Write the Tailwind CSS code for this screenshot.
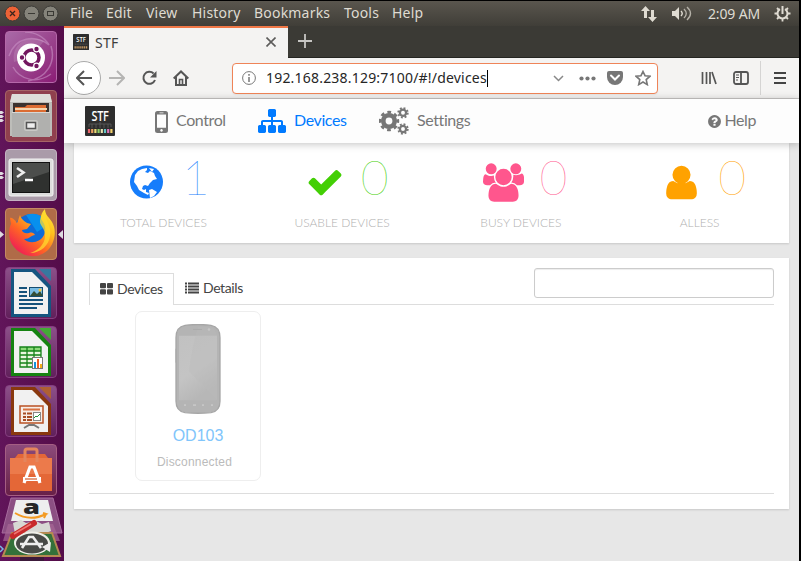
<!DOCTYPE html>
<html lang="en">
<head>
<meta charset="utf-8">
<title>STF</title>
<script src="https://cdn.jsdelivr.net/npm/@tailwindcss/browser@4"></script>
</head>
<body class="w-[801px] h-[561px] overflow-hidden bg-black pr-[2px] pt-px font-['Noto_Sans',sans-serif]">
<div class="flex h-[560px] w-[799px] flex-col overflow-hidden">
  <!-- System menu bar -->
  <header class="flex h-[25px] shrink-0 items-center bg-linear-to-b from-[#5a564e] to-[#403e38] text-[14px] text-[#dfdbd2]">
    <svg class="ml-[4px] h-[18px] w-[56px] shrink-0" viewBox="0 0 56 18" fill="none">
      <circle cx="8.500" cy="8.500" r="7.500" fill="#ed6236" stroke="#3c3b37"/><path d="M6 6l5 5m0-5l-5 5" stroke="#3c241c" stroke-width="1.300"/>
      <circle cx="27.500" cy="8.500" r="7.500" fill="#85837a" stroke="#3c3b37"/><path d="M24 8.500h7" stroke="#3a3934"/>
      <circle cx="46.500" cy="8.500" r="7.500" fill="#85837a" stroke="#3c3b37"/><rect x="43.500" y="6.500" width="6" height="4" stroke="#3a3934"/>
    </svg>
    <nav class="-mt-px ml-[10px] flex whitespace-nowrap leading-[24px] tracking-[0.200px]">
      <span class="w-[36px]">File</span><span class="w-[40px]">Edit</span><span class="w-[46px]">View</span><span class="w-[62px]">History</span><span class="w-[90px]">Bookmarks</span><span class="w-[48px]">Tools</span><span>Help</span>
    </nav>
    <div class="ml-auto mr-[8px] flex items-center">
      <svg class="h-[18px] w-[18px]" viewBox="0 0 18 18" fill="#dfdbd2"><path d="M5.500 1l4.500 5H7v7H4V6H1zM12.500 17L8 12h3V5h3v7h3z"/></svg>
      <svg class="ml-[14px] h-[18px] w-[21px]" viewBox="0 0 21 18" fill="none" stroke="#dfdbd2" stroke-width="1.400"><path d="M0 6h3l4-4v13l-4-4H0z" fill="#dfdbd2" stroke="none"/><path d="M9 6q2.500 2.500 0 5"/><path d="M12 4q4.500 4.500 0 9M15 2q7 6.500 0 13" stroke="#b5b1a8"/></svg>
      <span class="ml-[15px] w-[54px] whitespace-nowrap text-[14px] leading-[20px] tracking-[-0.150px]">2:09 AM</span>
      <svg class="ml-[12px] h-[17px] w-[17px]" viewBox="0 0 17 17" fill="none" stroke="#dfdbd2"><path d="M6 4.200a5 5 0 1 0 5 0" stroke-width="2"/><path d="M8.500 1v8" stroke-width="2"/><path d="M3 3l2 2M14 3l-2 2M0.500 8.500h3M13.500 8.500h3M3 14l2-2M14 14l-2-2M8.500 13v3.500" stroke-width="1.800"/></svg>
    </div>
  </header>

  <div class="flex min-h-0 flex-1">
    <!-- Application launcher -->
    <aside class="relative flex w-[64px] shrink-0 flex-col items-start gap-[7px] overflow-hidden bg-linear-to-r from-[#61155a] to-[#540c49] pl-[5px] pt-[5px]">
      <div class="h-[52px] w-[52px] shrink-0 rounded-[4px] border border-[#b568a9] bg-linear-to-br from-[#a96aa8] to-[#8b1a76]">
        <svg class="h-[50px] w-[50px]" viewBox="0 0 50 50" fill="none"><path d="M3 24C9 5 29 2 43 13 38 5 29 0 19 0M45 14c5 16-4 32-23 35M7 35c7 13 24 17 38 7" stroke="#c891c4" stroke-width="1.500" opacity=".6"/><path d="M8 30C5 13 20 2 38 9L25 25z" fill="#fff" opacity=".13"/><circle cx="25" cy="25.500" r="14" fill="#fff"/><circle cx="25.500" cy="25.500" r="7.500" stroke="#72165f" stroke-width="3.500"/><g fill="#72165f" stroke="#fff" stroke-width="1.200"><circle cx="16" cy="25.500" r="2.800"/><circle cx="30.500" cy="17" r="2.800"/><circle cx="30.500" cy="34" r="2.800"/></g></svg>
      </div>
      <div class="h-[52px] w-[52px] shrink-0 rounded-[4px] border border-[#a66567] bg-[#90404e]">
        <svg class="h-[50px] w-[50px]" viewBox="0 0 50 50"><path d="M6 3h38l2 9v33H4V12z" fill="#bdbdb9"/><path d="M6 3h38l2 8H4z" fill="#deded9"/><path d="M7 12h36v12H7z" fill="#3c322e"/><path d="M9 16h10l2-2h19v9H9z" fill="#dc6c32"/><path d="M9 18h32" stroke="#f6d5ad" stroke-width="2"/><path d="M6 21h38v25H6z" fill="#b0b0ae"/><path d="M6 21.500h38" stroke="#d7d7d5"/><rect x="18" y="29" width="14" height="11" rx="2.500" fill="#c9c9c6"/><rect x="20.500" y="31.500" width="9" height="6" fill="#eee" stroke="#555" stroke-width="1.500"/></svg>
      </div>
      <div class="h-[52px] w-[52px] shrink-0 rounded-[4px] border border-[#c4b3c2] bg-[#aa9ba9]">
        <svg class="h-[50px] w-[50px]" viewBox="0 0 50 50" fill="none"><rect x="3" y="9" width="44" height="37" rx="2" fill="#ddd" stroke="#f3f3f3"/><rect x="6.500" y="12.500" width="37" height="30" fill="#2f312f" stroke="#111"/><path d="M7 13h36v9L7 34z" fill="#fff" opacity=".14"/><path d="M11 18l6.500 4.500-6.500 4.500" stroke="#eee" stroke-width="2.600"/><path d="M19 30h8" stroke="#fff" stroke-width="2.500"/></svg>
      </div>
      <div class="h-[52px] w-[52px] shrink-0 rounded-[4px] border border-[#c38a64] bg-[#b06b48]">
        <svg class="h-[50px] w-[50px]" viewBox="0 0 50 50">
          <defs><linearGradient id="fx" x1="1" y1="0" x2=".2" y2="1"><stop offset="0" stop-color="#fff23f"/><stop offset=".35" stop-color="#ffbe1c"/><stop offset=".65" stop-color="#ff6524"/><stop offset="1" stop-color="#ed145c"/></linearGradient></defs>
          <circle cx="26" cy="24" r="19" fill="#0d6bd8"/><path d="M20 6q15-5 22 10L31 23z" fill="#0790ee"/><path d="M4 9c3-1 6 4 7 5l3-8c1 4 4 6 7 8l4 1-4 5-5 1c0 2 3 4 7 3 3-1 5 0 6 2-4 0-5 4-11 4 6 6 17 3 20-4 3-8 0-12-3-16-1-2 1-7 4-10 0 6 4 8 7 13 5 8 3 21-4 28-10 10-26 7-34-3C1 30 3 19 5 15z" fill="url(#fx)"/><path d="M39 2c0 10 7 15 5 25-1 9-9 17-20 17 13-4 20-16 11-28-3-5 1-10 4-14z" fill="#ffda2d" opacity=".75"/>
        </svg>
      </div>
      <div class="h-[52px] w-[52px] shrink-0 rounded-[4px] border border-[#853e80] bg-linear-to-b from-[#8c5089] to-[#61205b]">
        <svg class="h-[50px] w-[50px]" viewBox="0 0 50 50"><path d="M5 1h24l16 17v31H5z" fill="#155580"/><path d="M8 4h18l16 16v26H8z" fill="#f1f1f1"/><path d="M33 1h12v12z" fill="#36789f"/><path d="M13 20h8M13 24h8M13 28h8M13 32h24M13 36h24M13 40h18" stroke="#15527b" stroke-width="2"/><rect x="23.500" y="19.500" width="13" height="9" fill="#79bce3" stroke="#174e70"/><path d="M24 28l4-5 3 3 3-3 3 5z" fill="#344e35"/><circle cx="34" cy="22" r="1.500" fill="#f7c63c"/></svg>
      </div>
      <div class="h-[52px] w-[52px] shrink-0 rounded-[4px] border border-[#853e80] bg-linear-to-b from-[#8c5089] to-[#61205b]">
        <svg class="h-[50px] w-[50px]" viewBox="0 0 50 50"><path d="M5 1h24l16 17v31H5z" fill="#168311"/><path d="M8 4h18l16 16v26H8z" fill="#f1f1f1"/><path d="M33 1h12v12z" fill="#44aa35"/><path d="M14 20h21v20H14z" fill="#eaf7df"/><path d="M14 20h21v4H14z" fill="#8cda79"/><path d="M14 20h21v20H14zM21 20v20M28 20v20M14 24h21M14 28h21M14 32h21M14 36h21" fill="none" stroke="#158218" stroke-width="1.300"/><rect x="26.500" y="30.500" width="10" height="11" fill="#fff" stroke="#777"/><path d="M28 35h2v6h-2z" fill="#1591dc"/><path d="M31 32h2v9h-2z" fill="#ee5c25"/><path d="M34 37h2v4h-2z" fill="#f4ae18"/></svg>
      </div>
      <div class="h-[52px] w-[52px] shrink-0 rounded-[4px] border border-[#853e80] bg-linear-to-b from-[#8c5089] to-[#61205b]">
        <svg class="h-[50px] w-[50px]" viewBox="0 0 50 50"><path d="M5 1h24l16 17v31H5z" fill="#89380e"/><path d="M8 4h18l16 16v26H8z" fill="#f1f1f1"/><path d="M33 1h12v12z" fill="#af6033"/><rect x="14" y="20" width="23" height="17" fill="#f8eee7" stroke="#b95224" stroke-width="1.500"/><path d="M17 23.500h17" stroke="#d87343" stroke-width="2"/><path d="M17 27.500h3m1 0h5M17 31h3m1 0h5M17 34h3m1 0h5" stroke="#a74d24" stroke-width="1.800"/><rect x="27.500" y="26.500" width="7" height="8" fill="#fff" stroke="#888"/><path d="M28 32l2-2 1 1 3-3" fill="none" stroke="#23933b"/><path d="M18 42l5-3h5l5 3" fill="none" stroke="#777" stroke-width="2"/></svg>
      </div>
      <div class="h-[52px] w-[52px] shrink-0 rounded-[4px] border border-[#a55e83] bg-linear-to-b from-[#8c4b7b] to-[#682048]">
        <svg class="h-[50px] w-[50px]" viewBox="0 0 50 50" fill="none"><path d="M4 13h5l3-4h27l3 4h4v33H4z" fill="#e46737"/><path d="M4 13h42v16H4z" fill="#f08354" opacity=".7"/><path d="M19 17V6q0-2 2-2h8q2 0 2 2v11" stroke="#e4855d" stroke-width="3"/><path d="M18 38l6-16h4l6 16" stroke="#fff" stroke-width="3.200"/><path d="M17 34h18" stroke="#fff" stroke-width="4"/><path d="M19 34h12" stroke="#d56a3e" stroke-width="1.300"/></svg>
      </div>
      <!-- Running markers and the folded end of the launcher -->
      <svg class="absolute left-0 top-0 h-[535px] w-[64px]" viewBox="0 0 64 535" fill="#dedbe0">
        <path d="M0 85h2l2 1.500-2 1.500H0zM0 89h2l2 1.500-2 1.500H0zM0 93h2l2 1.500-2 1.500H0zM0 146h2l2 1.500-2 1.500H0zM0 150h2l2 1.500-2 1.500H0zM0 205l4 3.500-4 3.500zM63 204v9l-5-4.500z"/>
        <path d="M11 472h42l9 35H2z" fill="#8c4f83" stroke="#a66b9d"/><path d="M16 474h32l5 21H11z" fill="#eee"/>
        <text x="23" y="488" font-family="Open Sans, sans-serif" font-size="20" font-weight="800" fill="#262626" textLength="17" lengthAdjust="spacingAndGlyphs">a</text><path d="M15 487q15 9 31 1l-3-1m3 1l-2 4" fill="none" stroke="#f39a22" stroke-width="2"/>
        <path d="M8 498h45l7 17H3z" fill="#a66895" opacity=".7"/><path d="M13 497l8-3 5 3 10-2 6 3 7-2 2 9-8 3H15z" fill="#d7d8d4"/>
        <path d="M12 507h40l8 23H3z" fill="#34713a" stroke="#b58a52" stroke-width="2"/><path d="M20 531h24v4H20z" fill="#3c1a3a"/><ellipse cx="32" cy="517" rx="18" ry="11.500" fill="#efefe9"/><ellipse cx="32" cy="517.500" rx="16" ry="10" fill="#484a47"/><path d="M22 522l7-11h4l8 11M20 518h23" fill="none" stroke="#eee" stroke-width="2.600"/><path d="M42 521l9-5-1 10z" fill="#eee"/><path d="M13 510l21-13" fill="none" stroke="#c82a2c" stroke-width="6" stroke-linecap="round"/><path d="M14 508l17-10" stroke="#ef7771" stroke-width="1.500"/><path d="M0 520l3 3-3 3" fill="none" stroke="#79b9e7" stroke-width="1.500"/>
      </svg>
    </aside>

    <main class="flex min-w-0 flex-1 flex-col bg-[#e7e7e7]">
      <!-- Browser tabs -->
      <div class="flex h-[32px] shrink-0 border-b border-[#252521] bg-[#3b3a35]">
        <div class="flex h-[32px] w-[224px] items-center border-t-2 border-[#f07746] bg-[#f4f3f2] pb-[2px] pl-[9px] pr-[12px] text-[14px] text-[#3d3d3d]">
          <svg class="h-[16px] w-[16px]" viewBox="0 0 30 30"><rect width="30" height="30" rx="1" fill="#2e2e2e"/><text x="6" y="15" font-family="Open Sans, sans-serif" font-size="14" font-weight="600" fill="#fff" textLength="18" lengthAdjust="spacingAndGlyphs">STF</text><path d="M4 19h23" stroke="#777" stroke-dasharray="2 1"/><path d="M3 25h24" stroke="#e6b06f" stroke-width="4" stroke-dasharray="2 1.600"/></svg>
          <span class="ml-[6px] tracking-[0.300px]">STF</span>
          <svg class="ml-auto h-[10px] w-[10px]" viewBox="0 0 10 10" stroke="#5d5c5b" stroke-width="1.600"><path d="M.5.500l9 9m0-9l-9 9"/></svg>
        </div>
        <svg class="ml-[10px] mt-[8px] h-[14px] w-[14px]" viewBox="0 0 14 14" stroke="#c7c6c3" stroke-width="1.800"><path d="M7 0v14M0 7h14"/></svg>
      </div>
      <!-- Address toolbar -->
      <div class="flex h-[41px] shrink-0 items-center border-b border-[#c8c6c5] bg-[#f4f3f2]">
        <div class="ml-[3px] flex h-[34px] w-[34px] items-center justify-center rounded-full border border-[#aaa] bg-white"><svg class="h-[16px] w-[16px]" viewBox="0 0 16 16" fill="none" stroke="#555" stroke-width="2"><path d="M16 8H1M8 1L1 8l7 7"/></svg></div>
        <svg class="ml-[8px] h-[16px] w-[16px]" viewBox="0 0 16 16" fill="none" stroke="#b5b4b3" stroke-width="2"><path d="M0 8h15M8 1l7 7-7 7"/></svg>
        <svg class="ml-[16px] h-[16px] w-[16px]" viewBox="0 0 16 16" fill="none" stroke="#555" stroke-width="2"><path d="M12.600 3.500A6 6 0 1 0 14 10"/><path d="M15.500 1v6.500H9z" fill="#555" stroke="none"/></svg>
        <svg class="ml-[16px] h-[16px] w-[16px]" viewBox="0 0 16 16" fill="none" stroke="#555" stroke-width="2"><path d="M.7 8.500L8 1.500l7.300 7M3 7v8h10V7"/><path d="M6.500 15V9.500h3V15" stroke-width="1.600"/></svg>
        <div class="ml-[43px] flex h-[31px] w-[426px] items-center rounded-[4px] border border-[#ef8458] bg-white pl-[9px] shadow-[0_1px_2px_rgba(0,0,0,0.06)]">
          <svg class="h-[14px] w-[14px]" viewBox="0 0 14 14" fill="none" stroke="#777"><circle cx="7" cy="7" r="6.400"/><path d="M7 6v5M7 3v1.800" stroke-width="1.500"/></svg>
          <span class="ml-[10px] w-[221px] whitespace-nowrap text-[14px] leading-[18px] tracking-[0.200px] text-[#262626]">192.168.238.129:7100/#!/devices</span><i class="h-[17px] w-px bg-black"></i>
          <svg class="ml-[65px] h-[7px] w-[11px]" viewBox="0 0 11 7" fill="none" stroke="#888" stroke-width="1.500"><path d="M1 1l4.500 4.500L10 1"/></svg>
          <svg class="ml-[15px] h-[5px] w-[17px]" viewBox="0 0 17 5" fill="#777"><circle cx="2.500" cy="2.500" r="2.100"/><circle cx="8.500" cy="2.500" r="2.100"/><circle cx="14.500" cy="2.500" r="2.100"/></svg>
          <svg class="ml-[11px] h-[14px] w-[16px]" viewBox="0 0 16 14"><path d="M2 0h12q2 0 2 2v4a8 8 0 0 1-16 0V2q0-2 2-2z" fill="#777"/><path d="M4 4.500l4 4 4-4" fill="none" stroke="#fff" stroke-width="2" stroke-linecap="round"/></svg>
          <svg class="ml-[12px] h-[16px] w-[16px]" viewBox="0 0 16 16" fill="none" stroke="#777" stroke-width="1.600" stroke-linejoin="miter"><path d="M8 1.500l2 4.200 5 .5-3.800 3.400 1.100 5L8 12l-4.300 2.600 1.100-5L1 6.200l5-.5z"/></svg>
        </div>
        <svg class="ml-[43px] h-[14px] w-[16px]" viewBox="0 0 16 14" stroke="#555" stroke-width="1.700"><path d="M1.500 1v12M5.500 1v12M9 1v12M11 1l4 12"/></svg>
        <svg class="ml-[16px] h-[14px] w-[16px]" viewBox="0 0 16 14" fill="none" stroke="#555" stroke-width="1.800"><rect x="1" y="1" width="14" height="12" rx="2"/><path d="M8 1v12"/><path d="M3 4h3M3 6.500h3M3 9h2" stroke-width="1.100"/></svg>
        <i class="ml-[11px] h-[34px] w-px bg-[#d5d4d3]"></i>
        <svg class="ml-[13px] h-[12px] w-[12px]" viewBox="0 0 12 12" stroke="#444" stroke-width="2"><path d="M0 1h12M0 6h12M0 11h12"/></svg>
      </div>

      <!-- Page navigation -->
      <nav class="relative z-10 flex h-[44px] shrink-0 items-center bg-[#fdfdfd] font-[Lato,sans-serif] text-[16px] tracking-[-0.400px] text-[#777] shadow-[0_1px_8px_rgba(0,0,0,0.25)]">
        <svg class="ml-[21px] h-[30px] w-[30px]" viewBox="0 0 30 30"><rect width="30" height="30" rx="1" fill="#2e2e2e"/><text x="6.500" y="14.500" font-family="Open Sans, sans-serif" font-size="14" font-weight="600" fill="#fff" textLength="17" lengthAdjust="spacingAndGlyphs">STF</text><path d="M4 21v-3h22v3M7 18v4M11 18v4M15 16v6M19 18v4M23 18v4" fill="none" stroke="#666" stroke-width=".7"/><g stroke-width="2.200"><path d="M4 23v4" stroke="#e8646a"/><path d="M7.200 23v4" stroke="#e9a05f"/><path d="M10.400 23v4" stroke="#e9db76"/><path d="M13.600 23v4" stroke="#8ccb65"/><path d="M16.800 23v4" stroke="#e8e2b0"/><path d="M20 23v4" stroke="#62c5c6"/><path d="M23.200 23v4" stroke="#dc75b8"/><path d="M26.400 23v4" stroke="#efce6a"/></g></svg>
        <svg class="ml-[40px] mt-[2px] h-[22px] w-[13px]" viewBox="0 0 13 22"><path fill-rule="evenodd" d="M2.500 0h8Q13 0 13 2.500v17q0 2.500-2.500 2.500h-8Q0 22 0 19.500v-17Q0 0 2.500 0zM2 3.500v13.300h9V3.500zM4.500 1.500v.7h4v-.7zM6.500 18.100a1.300 1.300 0 1 0 .01 0z" fill="#777"/></svg>
        <span class="-mt-[2px] ml-[8px] w-[50px]">Control</span>
        <svg class="ml-[32px] h-[28px] w-[28px]" viewBox="0 0 1792 1792" fill="#007aff"><path d="M1792 1248v320q0 40-28 68t-68 28h-320q-40 0-68-28t-28-68v-320q0-40 28-68t68-28h96v-192h-512v192h96q40 0 68 28t28 68v320q0 40-28 68t-68 28h-320q-40 0-68-28t-28-68v-320q0-40 28-68t68-28h96v-192h-512v192h96q40 0 68 28t28 68v320q0 40-28 68t-68 28h-320q-40 0-68-28t-28-68v-320q0-40 28-68t68-28h96v-192q0-52 38-90t90-38h512v-192h-96q-40 0-68-28t-28-68v-320q0-40 28-68t68-28h320q40 0 68 28t28 68v320q0 40-28 68t-68 28h-96v192h512q52 0 90 38t38 90v192h96q40 0 68 28t28 68z"/></svg>
        <span class="-mt-[2px] ml-[8px] w-[53px] text-[#007aff]">Devices</span>
        <svg class="ml-[32px] h-[28px] w-[30px]" viewBox="0 0 30 28" fill="none" stroke="#777"><circle cx="10" cy="14" r="5.700" stroke-width="4.600"/><circle cx="10" cy="14" r="8.800" stroke-width="2.800" stroke-dasharray="3.600 3.312" transform="rotate(-12 10 14)"/><circle cx="24" cy="5.800" r="3.100" stroke-width="2.300"/><circle cx="24" cy="5.800" r="4.800" stroke-width="1.800" stroke-dasharray="1.900 1.870"/><circle cx="24" cy="22" r="3.100" stroke-width="2.300"/><circle cx="24" cy="22" r="4.800" stroke-width="1.800" stroke-dasharray="1.900 1.870"/></svg>
        <span class="-mt-[2px] ml-[8px]">Settings</span>
        <svg class="ml-auto h-[15px] w-[15px]" viewBox="0 0 1792 1792" fill="#777"><path d="M1024 1376v-192q0-14-9-23t-23-9h-192q-14 0-23 9t-9 23v192q0 14 9 23t23 9h192q14 0 23-9t9-23zm256-672q0-88-55.500-163t-138.500-116-170-41q-243 0-371 213-15 24 8 42l132 100q7 6 19 6 16 0 25-12 53-68 86-92 34-24 86-24 48 0 85.500 26t37.500 59q0 38-20 61t-68 45q-63 28-115.500 86.500t-52.500 125.500v36q0 14 9 23t23 9h192q14 0 23-9t9-23q0-19 21.500-49.500t54.500-49.500q32-18 49-28.500t46-35 44.500-48 28-60.500 12.500-81zm384 192q0 209-103 385.500t-279.500 279.500-385.500 103-385.500-103-279.500-279.500-103-385.500 103-385.500 279.500-279.500 385.500-103 385.500 103 279.500 279.500 103 385.500z"/></svg>
        <span class="-mt-[2px] ml-[2px] mr-[43px]">Help</span>
      </nav>

      <!-- Device totals -->
      <section class="mx-[10px] grid h-[100px] shrink-0 grid-cols-4 bg-white font-[Lato,sans-serif] shadow-[0_1px_2px_rgba(0,0,0,0.14)]">
        <div class="flex flex-col items-center text-[#167dfb]">
          <div class="flex h-[72px] w-full items-center pl-[54px]">
            <svg class="mt-[6px] h-[40px] w-[38px] shrink-0" viewBox="0 0 38 40"><circle cx="18.500" cy="20" r="16.500" fill="currentColor"/><g fill="#fff"><path d="M7 13l3-4 4-2 5-1v2l-2 2 3 1 2-2 4 2 1 3 2 3-4 1-3 3-2 3-3-1-2 1-1 3 2 1 2-1v3l3 1-1 2-4-2-5-3-2-4-3-4z"/><path d="M21 28l3-1 5 3-3 4-4 2zM21 6l5 1-2 3z"/></g></svg>
            <span class="-mt-[5px] ml-[16px] text-[48px] font-thin leading-[66px]">1</span>
          </div>
          <span class="text-[12px] font-light leading-[16px] text-[#b0b0b0]">TOTAL DEVICES</span>
        </div>
        <div class="flex flex-col items-center text-[#43cf05]">
          <div class="flex h-[72px] w-full items-center pl-[53px]">
            <svg class="mt-[6px] h-[38px] w-[38px] shrink-0" viewBox="0 0 1792 1792" fill="currentColor"><path d="M1671 566q0 40-28 68l-724 724-136 136q-28 28-68 28t-68-28l-136-136-362-362q-28-28-28-68t28-68l136-136q28-28 68-28t68 28l294 295 656-657q28-28 68-28t68 28l136 136q28 28 28 68z"/></svg>
            <span class="-mt-[5px] ml-[17px] text-[48px] font-thin leading-[66px]">0</span>
          </div>
          <span class="text-[12px] font-light leading-[16px] text-[#b0b0b0]">USABLE DEVICES</span>
        </div>
        <div class="flex flex-col items-center text-[#ff568d]">
          <div class="flex h-[72px] w-full items-center pl-[51px]">
            <svg class="mt-[6px] h-[39px] w-[41px] shrink-0" viewBox="-64 0 1920 1792" fill="currentColor"><path d="M529 896q-162 5-265 128h-134q-82 0-138-40.500t-56-118.500q0-353 124-353 6 0 43.500 21t97.500 42.500 119 21.500q67 0 133-23-5 37-5 66 0 159 93 293zm1071 637q0 120-73 189.500t-194 69.500h-874q-121 0-194-69.500t-73-189.500q0-53 3.500-103.500t14-109 26.500-108.500 43-97.500 62-81 85.500-53.500 111.500-20q10 0 43 21.500t73 48 107 48 135 21.500 135-21.500 107-48 73-48 43-21.500q61 0 111.500 20t85.500 53.500 62 81 43 97.500 26.500 108.500 14 109 3.500 103.500zm-1024-1277q0 106-75 181t-181 75-181-75-75-181 75-181 181-75 181 75 75 181zm704 384q0 159-112.500 271.500t-271.500 112.500-271.500-112.500-112.500-271.500 112.500-271.500 271.500-112.500 271.500 112.500 112.500 271.500zm576 225q0 78-56 118.500t-138 40.500h-134q-103-123-265-128 93-134 93-293 0-29-5-66 66 23 133 23 59 0 119-21.500t97.500-42.500 43.500-21q124 0 124 353zm-128-609q0 106-75 181t-181 75-181-75-75-181 75-181 181-75 181 75 75 181z"/></svg>
            <span class="-mt-[5px] ml-[16px] text-[48px] font-thin leading-[66px]">0</span>
          </div>
          <span class="text-[12px] font-light leading-[16px] text-[#b0b0b0]">BUSY DEVICES</span>
        </div>
        <div class="flex flex-col items-center text-[#ffa200]">
          <div class="flex h-[72px] w-full items-center pl-[52px]">
            <svg class="mt-[6px] h-[39px] w-[39px] shrink-0" viewBox="0 0 1792 1792" fill="currentColor"><path d="M1600 1399q0 109-62.500 187t-150.500 78h-982q-88 0-150.500-78t-62.500-187q0-85 8.500-160.500t31.500-152 58.500-131 94-89 134.500-34.500q164 128 377 128t377-128q76 0 134.500 34.500t94 89 58.500 131 31.500 152 8.500 160.500zm-288-855q0 172-122 294t-294 122-294-122-122-294 122-294 294-122 294 122 122 294z"/></svg>
            <span class="-mt-[5px] ml-[17px] text-[48px] font-thin leading-[66px]">0</span>
          </div>
          <span class="text-[12px] font-light leading-[16px] text-[#b0b0b0]">ALLESS</span>
        </div>
      </section>

      <!-- Device list -->
      <section class="mx-[10px] mt-[15px] h-[251px] shrink-0 bg-white px-[15px] pt-[15px] shadow-[0_1px_2px_rgba(0,0,0,0.14)]">
        <div class="flex h-[32px] border-b border-[#ddd] font-[Lato,sans-serif] text-[14px] tracking-[-0.400px] text-[#444]">
          <div class="flex h-[32px] w-[85px] items-center border border-b-0 border-[#ddd] bg-white pb-[2px] pl-[10px]">
            <svg class="h-[12px] w-[13px]" viewBox="0 0 13 12" fill="#444"><rect width="6" height="5.300" rx="1"/><rect x="7" width="6" height="5.300" rx="1"/><rect y="6.300" width="6" height="5.300" rx="1"/><rect x="7" y="6.300" width="6" height="5.300" rx="1"/></svg><span class="ml-[4px]">Devices</span>
          </div>
          <div class="flex items-center pb-[2px] pl-[11px]"><svg class="h-[12px] w-[14px]" viewBox="0 0 14 12" stroke="#444" stroke-width="1.800"><path d="M0 1.500h2m1 0h11M0 4.500h2m1 0h11M0 7.500h2m1 0h11M0 10.500h2m1 0h11"/></svg><span class="ml-[4px]">Details</span></div>
          <input aria-label="Search devices" class="-mt-[5px] ml-auto h-[30px] w-[240px] rounded-[3px] border border-[#ccc] bg-white shadow-[inset_0_1px_1px_rgba(0,0,0,0.075)]">
        </div>
        <div class="h-[189px] border-b border-[#ddd] pl-[46px] pt-[6px]">
          <div class="flex h-[170px] w-[126px] flex-col items-center rounded-[7px] border border-[#eee] pt-[12px] font-['Liberation_Sans',sans-serif]">
            <svg class="h-[90px] w-[46px]" viewBox="0 0 46 91" preserveAspectRatio="none"><defs><linearGradient id="sc" x1="0" y1="0" x2=".4" y2="1"><stop stop-color="#c1c1c1"/><stop offset=".6" stop-color="#c4c4c4"/><stop offset="1" stop-color="#b7b7b7"/></linearGradient></defs><path d="M1 14Q1 3 10 1.500q13-2 26 0Q45 3 45 14v64q0 10-9 11.500-13 1.500-26 0Q1 88 1 78z" fill="#b4b4b4" stroke="#a6a6a6" stroke-width="1.300"/><path d="M0 25v14" stroke="#aaa"/><path d="M4 12h38v65H4z" fill="url(#sc)"/><path d="M23 3h11q7 1 8 9v65L14 48q3-25 9-45z" fill="#bbb" opacity=".35"/><path d="M18 5.500h9" stroke="#aaa"/><circle cx="34" cy="5.500" r="1.300" fill="#c6c6c6"/><path d="M9 82h2M18 82h3M27 82h2M36 82h2" stroke="#c6c6c6" stroke-width="1.600"/></svg>
            <span class="mt-[11px] text-[16px] leading-[22px] text-[#80c5fb]">OD103</span>
            <span class="mr-[7px] mt-[7px] text-[12px] leading-[16px] tracking-[0.200px] text-[#bbb]">Disconnected</span>
          </div>
        </div>
      </section>
    </main>
  </div>
</div>
</body>
</html>
